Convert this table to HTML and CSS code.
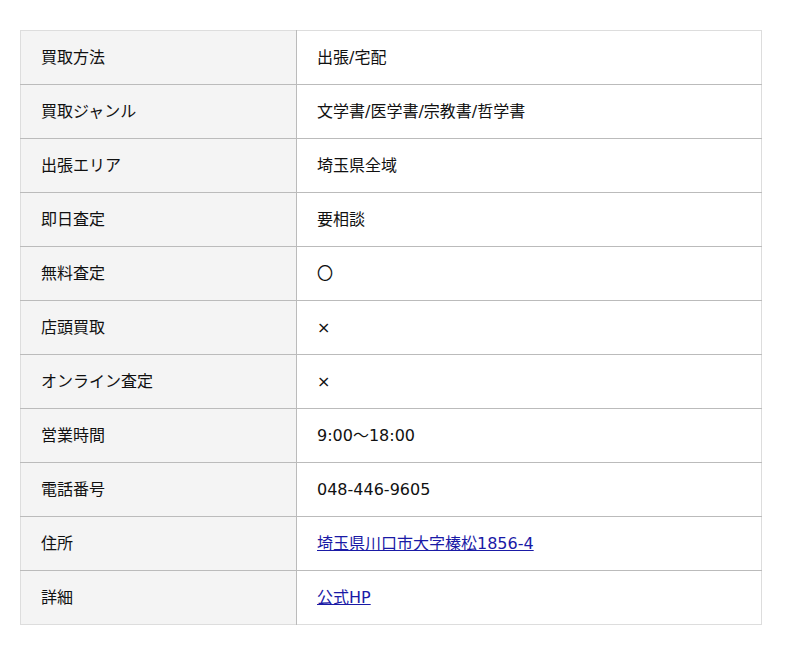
FILE: index.html
```html
<!DOCTYPE html>
<html lang="ja">
<head>
<meta charset="utf-8">
<link rel="stylesheet" href="styles.css">
</head>
<body>
<table class="info">
<tbody>
<tr><th>買取方法</th><td>出張/宅配</td></tr>
<tr><th>買取ジャンル</th><td>文学書/医学書/宗教書/哲学書</td></tr>
<tr><th>出張エリア</th><td>埼玉県全域</td></tr>
<tr><th>即日査定</th><td>要相談</td></tr>
<tr><th>無料査定</th><td>〇</td></tr>
<tr><th>店頭買取</th><td>×</td></tr>
<tr><th>オンライン査定</th><td>×</td></tr>
<tr><th>営業時間</th><td>9:00～18:00</td></tr>
<tr><th>電話番号</th><td>048-446-9605</td></tr>
<tr><th>住所</th><td><a href="#">埼玉県川口市大字榛松1856-4</a></td></tr>
<tr><th>詳細</th><td><a href="#">公式HP</a></td></tr>
</tbody>
</table>
</body>
</html>
```
FILE: styles.css
```css
body {
  margin: 0;
  padding: 30px 20px;
  background: #fff;
  font-family: "DejaVu Sans", "Noto Sans CJK JP", sans-serif;
  font-size: 16px;
  color: #111;
}
.info {
  width: 742px;
  border-collapse: collapse;
  border: 1px solid #ddd;
}
.info th,
.info td {
  height: 53px;
  padding: 0 20px;
  text-align: left;
  font-weight: normal;
  vertical-align: middle;
  line-height: 20px;
  border-top: 1px solid #bbb;
}
.info tr:first-child th,
.info tr:first-child td {
  border-top: 1px solid #ddd;
}
.info th {
  width: 235px;
  background: #f4f4f4;
  border-right: 1px solid #bbb;
}
.info a {
  color: #1a1aa6;
}
```
